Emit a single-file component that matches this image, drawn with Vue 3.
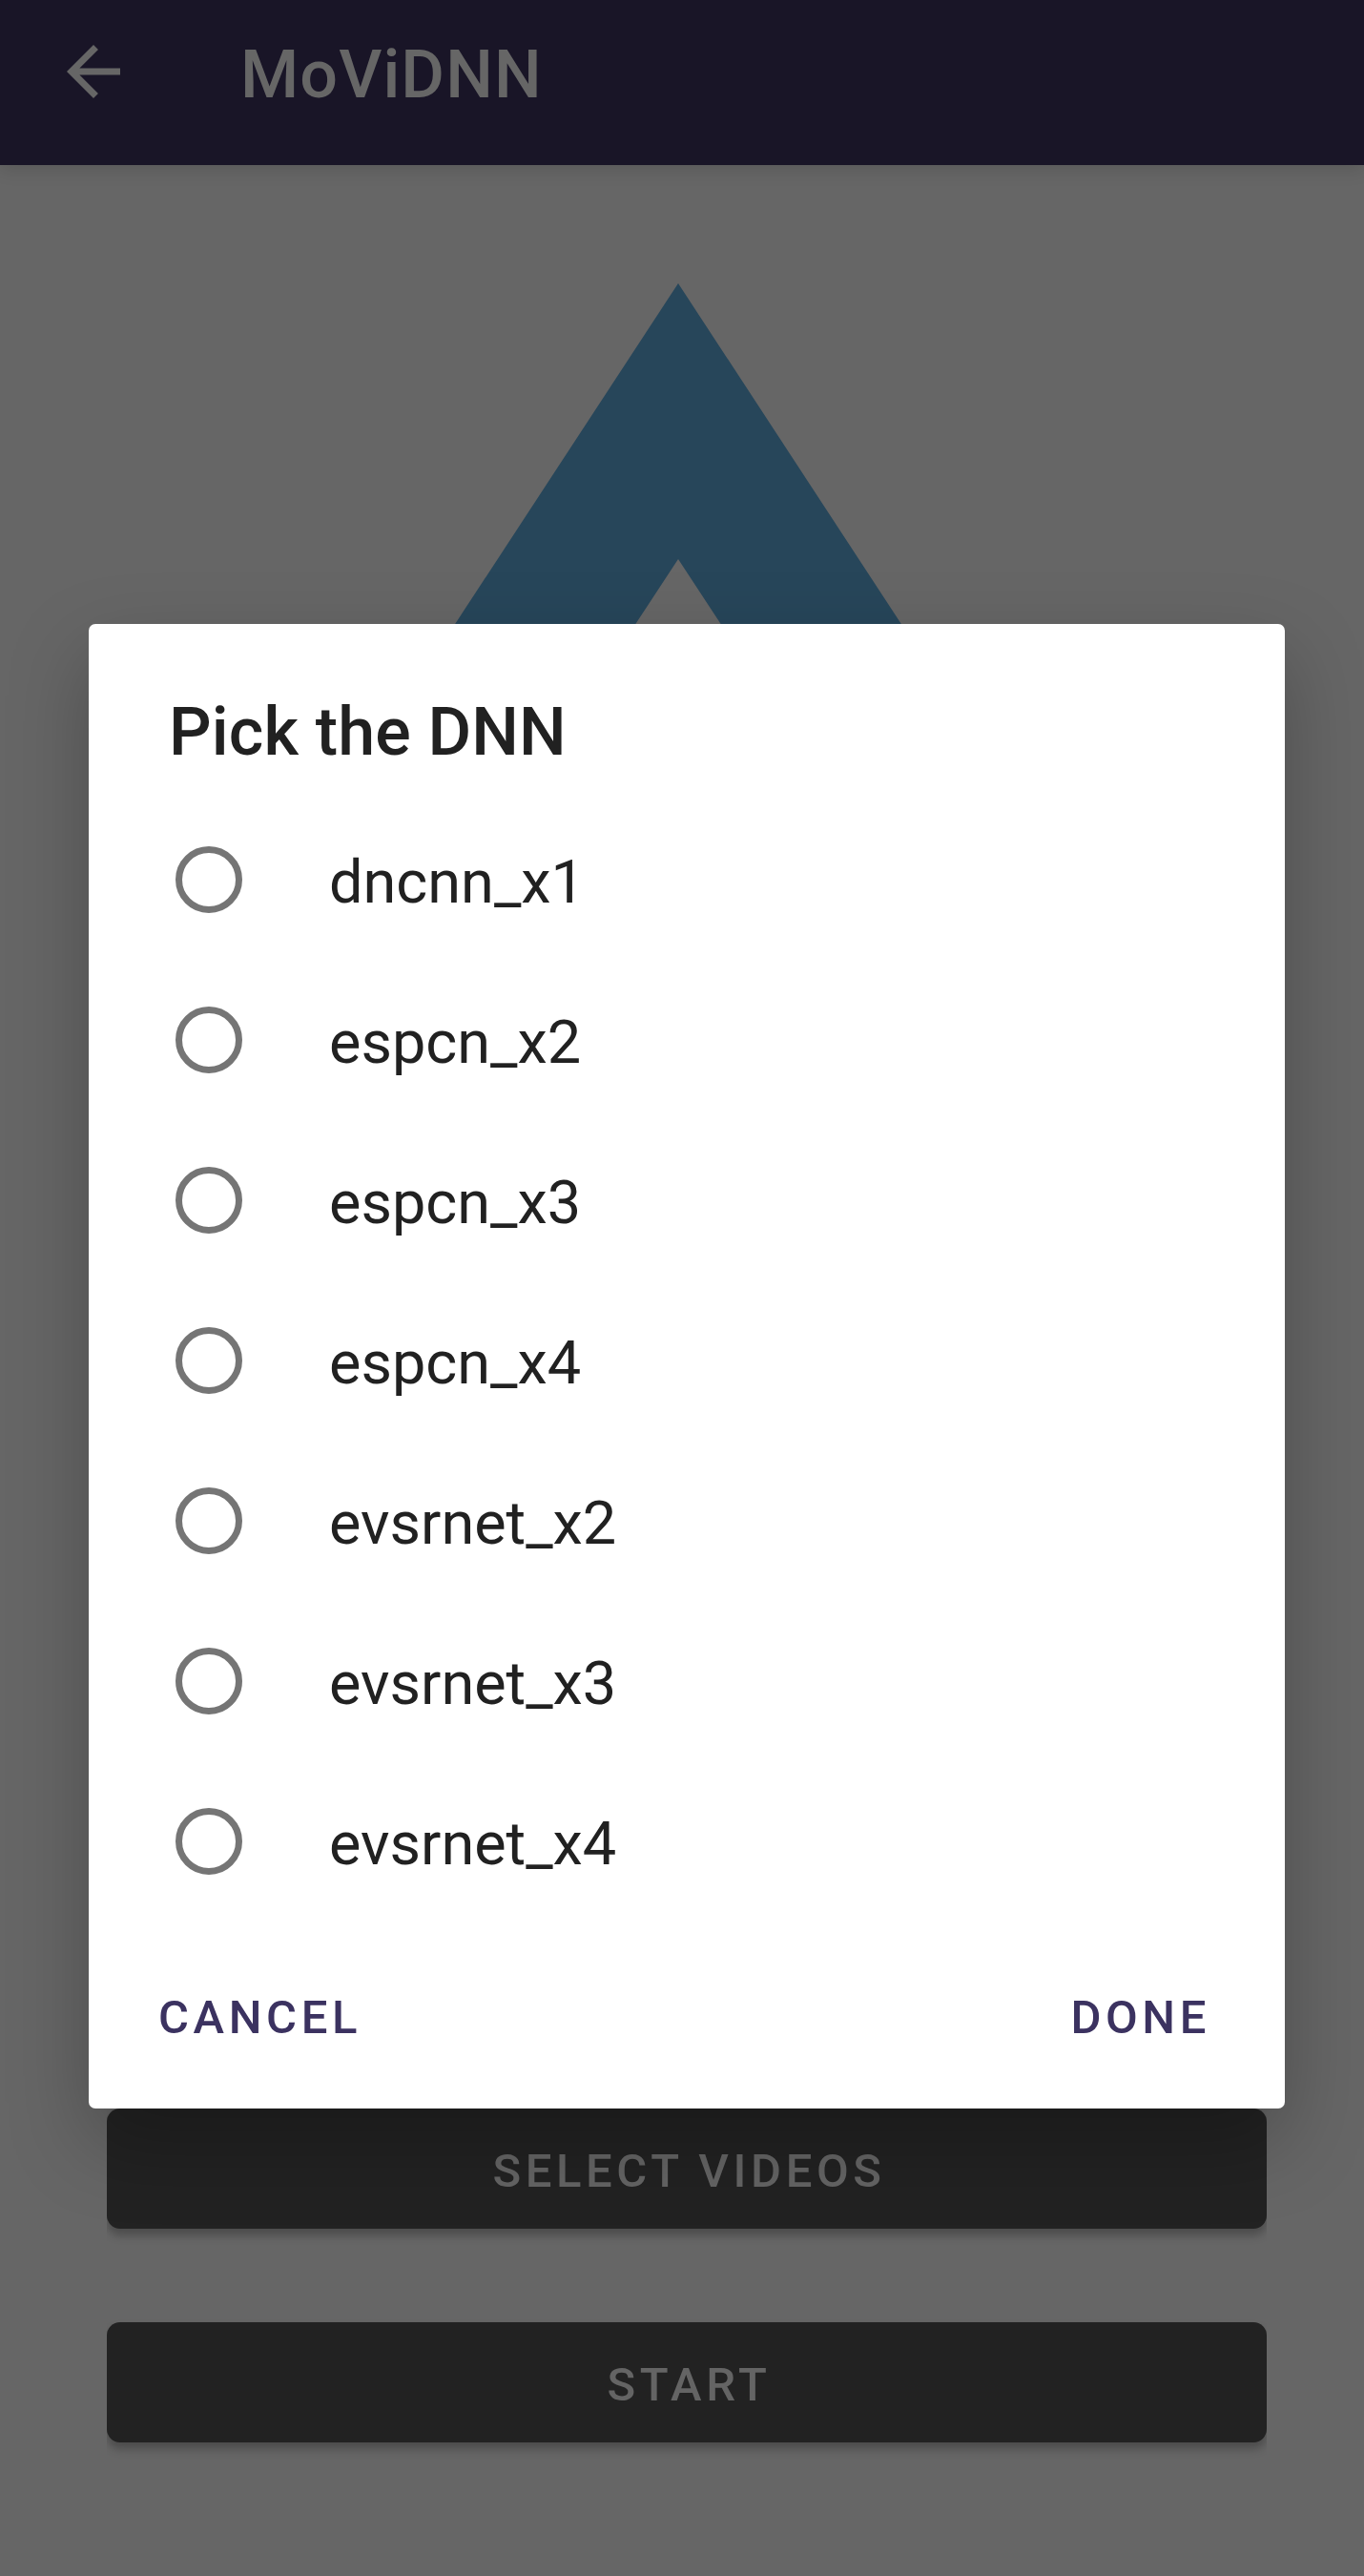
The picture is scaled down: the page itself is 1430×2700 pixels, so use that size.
<script setup>
import { ref } from 'vue'

const models = [
  'dncnn_x1',
  'espcn_x2',
  'espcn_x3',
  'espcn_x4',
  'evsrnet_x2',
  'evsrnet_x3',
  'evsrnet_x4',
]
const picked = ref('')
</script>

<template>
  <div class="screen">
    <header class="app-bar">
      <svg class="back" viewBox="0 0 24 24" aria-label="Back">
        <path d="M20 11H7.83l5.59-5.59L12 4l-8 8 8 8 1.41-1.41L7.83 13H20z" />
      </svg>
      <h1>MoViDNN</h1>
    </header>

    <main class="content">
      <svg class="logo" viewBox="0 0 600 458" aria-hidden="true">
        <path d="M300 0 0 458H189L300 289 411 458H600Z" />
      </svg>
      <div class="actions">
        <button class="action" type="button">SELECT VIDEOS</button>
        <button class="action" type="button">START</button>
      </div>
    </main>

    <section class="dialog" role="dialog">
      <h2>Pick the DNN</h2>
      <ul class="options">
        <li v-for="model in models" :key="model" class="option" @click="picked = model">
          <span class="radio" :class="{ on: picked === model }"></span>
          <span class="label">{{ model }}</span>
        </li>
      </ul>
      <footer class="dialog-actions">
        <button type="button">CANCEL</button>
        <button type="button">DONE</button>
      </footer>
    </section>
  </div>
</template>

<style>
body {
  margin: 0;
  background: #666;
}
</style>

<style scoped>
.screen {
  position: relative;
  display: flex;
  flex-direction: column;
  width: 1430px;
  height: 2700px;
  overflow: hidden;
  background: #666;
  font-family: Roboto, "Liberation Sans", sans-serif;
}

h1,
h2,
ul {
  margin: 0;
  padding: 0;
  list-style: none;
}

h1,
h2 {
  font-weight: 500;
}

button {
  border: 0;
  font: 500 49px/1 Roboto, "Liberation Sans", sans-serif;
  letter-spacing: 4.6px;
}

.app-bar {
  display: flex;
  flex: none;
  box-sizing: border-box;
  height: 173px;
  padding: 33px 56px 0;
  background: #191527;
  box-shadow: 0 4px 18px rgba(0, 0, 0, 0.14);
}

.back {
  width: 84px;
  height: 84px;
  fill: #666;
}

h1 {
  margin-left: 112px;
  color: #666;
  font-size: 70px;
  line-height: 90px;
  letter-spacing: 1.1px;
}

.content {
  display: flex;
  flex: 1;
  flex-direction: column;
  justify-content: space-between;
  padding: 124px 102px 140px 112px;
}

.logo {
  align-self: center;
  width: 600px;
  height: 458px;
  margin-right: 17.4px;
  fill: #27465a;
}

.actions {
  display: flex;
  flex-direction: column;
  gap: 98px;
}

.action {
  height: 126px;
  padding: 4px 0 0 5px;
  border-radius: 14px;
  background: #222;
  color: #646464;
  box-shadow: 0 7px 10px rgba(0, 0, 0, 0.26);
  clip-path: inset(-10px 0 -30px 0);
}

.dialog {
  position: absolute;
  top: 654px;
  left: 93px;
  display: flex;
  flex-direction: column;
  box-sizing: border-box;
  width: 1254px;
  height: 1556px;
  padding: 68px 0 0;
  border-radius: 7px;
  background: #fff;
  box-shadow: 0 34px 84px rgba(0, 0, 0, 0.25);
}

h2 {
  padding-left: 84px;
  color: #212121;
  font-size: 70px;
  line-height: 90px;
  letter-spacing: 0.15px;
}

.options {
  margin-top: 26px;
}

.option {
  display: flex;
  align-items: center;
  height: 168px;
  padding-left: 91px;
}

.radio {
  box-sizing: border-box;
  width: 70px;
  height: 70px;
  border: 7px solid #757575;
  border-radius: 50%;
}

.radio.on {
  background: radial-gradient(#3b3260 50%, transparent 52%);
}

.label {
  margin-left: 91px;
  padding-top: 5px;
  color: #212121;
  font-size: 63px;
}

.dialog-actions {
  display: flex;
  justify-content: space-between;
  padding: 65px 78px 0 73px;
}

.dialog-actions button {
  height: 70px;
  padding: 0;
  background: none;
  color: #3b3260;
}
</style>
